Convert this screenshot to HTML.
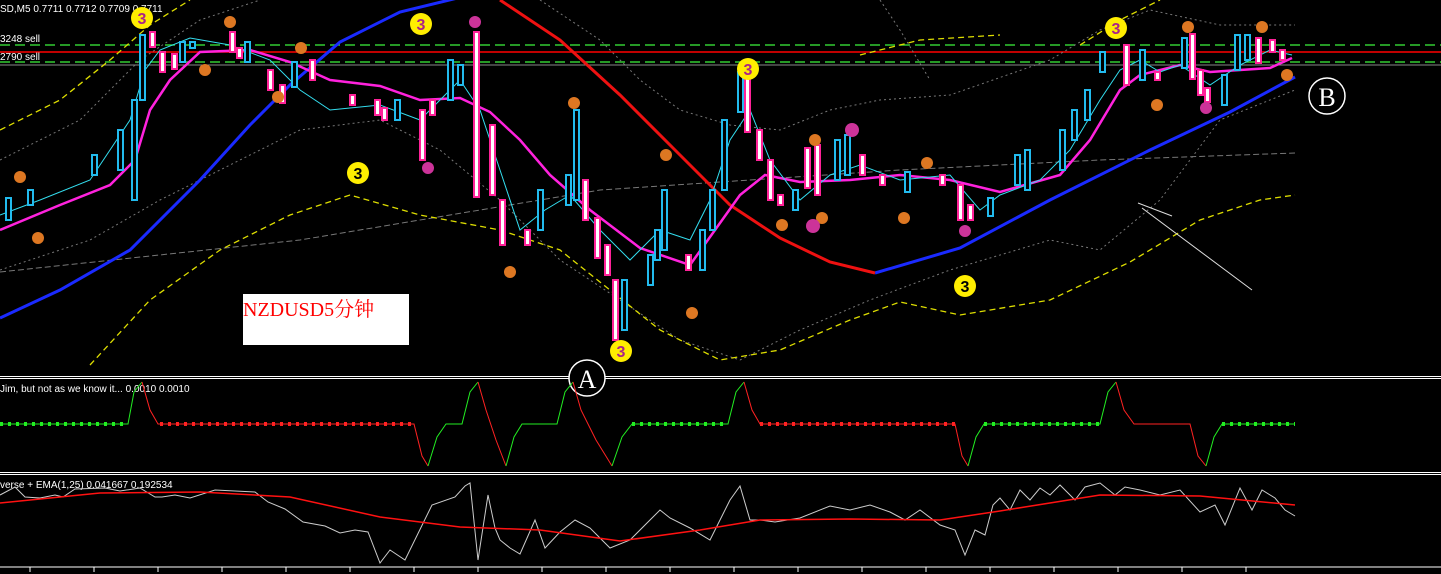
<!DOCTYPE html>
<html><head><meta charset="utf-8"><style>
html,body{margin:0;padding:0;background:#000;width:1441px;height:574px;overflow:hidden}
svg{display:block}
text{font-family:"Liberation Sans",sans-serif}
text.serif{font-family:"Liberation Serif","Noto Serif CJK SC",serif}
</style></head><body>
<svg width="1441" height="574" viewBox="0 0 1441 574" xmlns="http://www.w3.org/2000/svg">
<rect width="1441" height="574" fill="#000"/>
<line x1="0" y1="45" x2="1441" y2="45" stroke="#33cc33" stroke-width="1.5" stroke-dasharray="10,5"/>
<line x1="0" y1="52" x2="1441" y2="52" stroke="#ff0000" stroke-width="1.5"/>
<line x1="0" y1="62" x2="1441" y2="62" stroke="#33cc33" stroke-width="1.5" stroke-dasharray="10,5"/>
<line x1="0" y1="65" x2="1441" y2="65" stroke="#888" stroke-width="1"/>
<text x="0" y="12" fill="#fff" font-size="10">SD,M5  0.7711 0.7712 0.7709 0.7711</text>
<text x="0" y="42" fill="#fff" font-size="10">3248 sell</text>
<text x="0" y="60" fill="#fff" font-size="10">2790 sell</text>
<g fill="none" stroke="#777" stroke-width="1" stroke-dasharray="2,3">
<polyline points="0,160 80,120 140,60 200,20 260,0"/>
<polyline points="0,270 90,240 160,200 220,170 300,130 380,120 440,150 500,200 560,260 620,300 680,340 740,360 800,330 870,300 950,270 1050,240 1100,250 1160,200 1220,120 1295,90"/>
<polyline points="540,0 600,40 640,80 680,110 730,125 780,130 830,110 880,100 950,95 1050,60 1100,30 1150,10 1220,25 1295,25"/>
<polyline points="880,0 900,30 930,80"/>
</g>
<polyline points="0,272 300,240 600,190 900,170 1100,160 1295,153" fill="none" stroke="#777" stroke-width="1" stroke-dasharray="6,3"/>
<g fill="none" stroke="#dddd00" stroke-width="1.3" stroke-dasharray="6,4">
<polyline points="0,130 60,100 110,60 150,25 190,0"/>
<polyline points="90,365 150,300 220,250 290,215 350,195 420,215 500,230 560,250 610,290 660,330 720,360 780,350 850,320 900,302 960,315 1050,300 1130,262 1200,220 1260,200 1295,195"/>
<polyline points="1080,45 1120,20 1160,0"/>
<polyline points="860,55 920,40 1000,35"/>
</g>
<polyline points="0,318 60,290 130,250 200,180 250,125 290,85 340,42 400,12 470,-5" fill="none" stroke="#1a2aff" stroke-width="3"/>
<polyline points="875,273 960,248 1050,200 1150,150 1230,112 1295,77" fill="none" stroke="#1a2aff" stroke-width="3"/>
<polyline points="500,0 560,40 620,95 680,155 730,205 780,238 830,262 875,273" fill="none" stroke="#ee1111" stroke-width="3"/>
<polyline points="0,230 60,205 110,185 135,160 150,110 170,80 200,52 250,50 290,62 330,80 380,86 420,100 460,98 490,112 520,140 550,175 590,210 640,248 690,265 715,230 740,195 765,175 800,182 850,180 900,175 950,180 1000,192 1060,175 1090,140 1120,90 1140,75 1180,65 1210,72 1240,70 1270,68 1292,58" fill="none" stroke="#ff22dd" stroke-width="2.5"/>
<polyline points="0,215 40,200 90,180 130,120 145,70 160,50 190,38 230,45 270,60 300,90 330,110 380,105 420,120 460,80 480,110 500,170 520,230 545,210 570,195 600,230 630,260 660,230 690,240 710,200 730,140 750,110 770,160 800,200 830,175 860,165 900,180 950,175 980,210 1000,195 1040,180 1070,150 1100,100 1120,70 1140,60 1160,72 1180,65 1210,85 1240,65 1270,50 1292,55" fill="none" stroke="#33ddee" stroke-width="1"/>
<g fill="#000" stroke="#22bbee" stroke-width="2">
<rect x="6" y="198" width="5" height="22"/><rect x="28" y="190" width="5" height="15"/><rect x="92" y="155" width="5" height="20"/><rect x="118" y="130" width="5" height="40"/><rect x="132" y="100" width="5" height="100"/><rect x="140" y="35" width="5" height="65"/>
<rect x="180" y="42" width="5" height="20"/><rect x="190" y="42" width="5" height="6"/><rect x="245" y="42" width="5" height="20"/>
<rect x="292" y="62" width="5" height="25"/><rect x="395" y="100" width="5" height="20"/><rect x="448" y="60" width="5" height="40"/><rect x="458" y="65" width="5" height="20"/>
<rect x="538" y="190" width="5" height="40"/><rect x="566" y="175" width="5" height="30"/><rect x="574" y="110" width="5" height="90"/>
<rect x="622" y="280" width="5" height="50"/><rect x="648" y="255" width="5" height="30"/><rect x="655" y="230" width="5" height="30"/><rect x="662" y="190" width="5" height="60"/>
<rect x="700" y="230" width="5" height="40"/><rect x="710" y="190" width="5" height="40"/><rect x="722" y="120" width="5" height="70"/><rect x="738" y="72" width="5" height="40"/>
<rect x="793" y="190" width="5" height="20"/><rect x="835" y="140" width="5" height="40"/><rect x="845" y="135" width="5" height="40"/>
<rect x="905" y="172" width="5" height="20"/><rect x="988" y="198" width="5" height="18"/><rect x="1015" y="155" width="5" height="30"/><rect x="1025" y="150" width="5" height="40"/>
<rect x="1060" y="130" width="5" height="40"/><rect x="1072" y="110" width="5" height="30"/><rect x="1085" y="90" width="5" height="30"/><rect x="1100" y="52" width="5" height="20"/>
<rect x="1140" y="50" width="5" height="30"/><rect x="1182" y="38" width="5" height="30"/><rect x="1222" y="75" width="5" height="30"/><rect x="1235" y="35" width="5" height="35"/><rect x="1245" y="35" width="5" height="25"/>
</g>
<g fill="#fff" stroke="#ff2299" stroke-width="2">
<rect x="150" y="32" width="5" height="15"/><rect x="160" y="52" width="5" height="20"/><rect x="172" y="54" width="5" height="15"/><rect x="230" y="32" width="5" height="20"/><rect x="237" y="48" width="5" height="10"/>
<rect x="268" y="70" width="5" height="20"/><rect x="280" y="85" width="5" height="18"/><rect x="310" y="60" width="5" height="20"/><rect x="350" y="95" width="5" height="10"/><rect x="375" y="100" width="5" height="15"/><rect x="382" y="108" width="5" height="12"/>
<rect x="420" y="110" width="5" height="50"/><rect x="430" y="100" width="5" height="15"/><rect x="474" y="32" width="5" height="165"/><rect x="490" y="125" width="5" height="70"/>
<rect x="500" y="200" width="5" height="45"/><rect x="525" y="230" width="5" height="15"/><rect x="583" y="180" width="5" height="40"/><rect x="595" y="218" width="5" height="40"/><rect x="605" y="245" width="5" height="30"/><rect x="613" y="280" width="5" height="60"/>
<rect x="686" y="255" width="5" height="15"/><rect x="745" y="72" width="5" height="60"/><rect x="757" y="130" width="5" height="30"/><rect x="768" y="160" width="5" height="40"/><rect x="778" y="195" width="5" height="10"/>
<rect x="805" y="148" width="5" height="40"/><rect x="815" y="145" width="5" height="50"/><rect x="860" y="155" width="5" height="20"/><rect x="880" y="175" width="5" height="10"/><rect x="940" y="175" width="5" height="10"/><rect x="958" y="185" width="5" height="35"/><rect x="968" y="205" width="5" height="15"/>
<rect x="1124" y="45" width="5" height="40"/><rect x="1155" y="72" width="5" height="8"/><rect x="1190" y="34" width="5" height="45"/><rect x="1198" y="70" width="5" height="25"/><rect x="1205" y="88" width="5" height="14"/><rect x="1256" y="38" width="5" height="25"/><rect x="1270" y="40" width="5" height="12"/><rect x="1280" y="50" width="5" height="10"/>
</g>
<g font-size="11" font-weight="bold" text-anchor="middle">
<g fill="#dd7722"><circle cx="20" cy="177" r="6"/><circle cx="38" cy="238" r="6"/><circle cx="205" cy="70" r="6"/><circle cx="230" cy="22" r="6"/><circle cx="278" cy="97" r="6"/><circle cx="301" cy="48" r="6"/><circle cx="574" cy="103" r="6"/><circle cx="666" cy="155" r="6"/><circle cx="510" cy="272" r="6"/><circle cx="692" cy="313" r="6"/><circle cx="782" cy="225" r="6"/><circle cx="815" cy="140" r="6"/><circle cx="822" cy="218" r="6"/><circle cx="904" cy="218" r="6"/><circle cx="927" cy="163" r="6"/><circle cx="1157" cy="105" r="6"/><circle cx="1188" cy="27" r="6"/><circle cx="1262" cy="27" r="6"/><circle cx="1287" cy="75" r="6"/></g>
<g fill="#cc3399"><circle cx="428" cy="168" r="6"/><circle cx="475" cy="22" r="6"/><circle cx="852" cy="130" r="7"/><circle cx="813" cy="226" r="7"/><circle cx="965" cy="231" r="6"/><circle cx="1206" cy="108" r="6"/></g>
<g fill="#ffee00"><circle cx="142" cy="18" r="11"/><circle cx="421" cy="24" r="11"/><circle cx="358" cy="173" r="11"/><circle cx="748" cy="69" r="11"/><circle cx="1116" cy="28" r="11"/><circle cx="965" cy="286" r="11"/><circle cx="621" cy="351" r="11"/></g>
<g fill="#aa2288" font-size="16"><text x="142" y="24">3</text><text x="421" y="30">3</text><text x="748" y="75">3</text><text x="1116" y="34">3</text><text x="621" y="357">3</text></g>
<g fill="#000" font-size="16"><text x="358" y="179">3</text><text x="965" y="292">3</text></g>
</g>
<circle cx="1327" cy="96" r="18" fill="#000" stroke="#fff" stroke-width="1.5"/><text class="serif" x="1327" y="106" fill="#fff" font-size="26" text-anchor="middle">B</text>
<line x1="1138" y1="203" x2="1172" y2="216" stroke="#ddd"/><line x1="1142" y1="208" x2="1252" y2="290" stroke="#ddd"/>
<rect x="243" y="294" width="166" height="51" fill="#fff"/>
<text class="serif" x="243" y="316" fill="#ff0000" font-size="20">NZDUSD5分钟</text>
<rect x="0" y="376" width="1441" height="1" fill="#fff"/><rect x="0" y="378" width="1441" height="1" fill="#fff"/>
<rect x="0" y="472" width="1441" height="1" fill="#fff"/><rect x="0" y="474" width="1441" height="1" fill="#fff"/>
<circle cx="587" cy="378" r="18" fill="#000" stroke="#fff" stroke-width="1.5"/><text class="serif" x="587" y="388" fill="#fff" font-size="26" text-anchor="middle">A</text>
<text x="0" y="392" fill="#fff" font-size="10">Jim, but not as we know it...  0.0010 0.0010</text>
<polyline points="0,424 128,424 134,392 142,382" fill="none" stroke="#22ee22" stroke-width="1"/>
<polyline points="142,382 150,410 158,424 414,424 422,456 428,466" fill="none" stroke="#ff2222" stroke-width="1"/>
<polyline points="428,466 437,437 446,424 462,424 470,392 478,382" fill="none" stroke="#22ee22"/>
<polyline points="478,382 486,410 496,440 506,466" fill="none" stroke="#ff2222"/>
<polyline points="506,466 514,437 522,424 557,424 565,392 573,382" fill="none" stroke="#22ee22"/>
<polyline points="573,382 581,410 596,440 612,466" fill="none" stroke="#ff2222"/>
<polyline points="612,466 622,437 632,424 728,424 736,392 744,382" fill="none" stroke="#22ee22"/>
<polyline points="744,382 752,410 760,424 955,424 962,456 968,466" fill="none" stroke="#ff2222"/>
<polyline points="968,466 976,437 984,424 1100,424 1108,392 1116,382" fill="none" stroke="#22ee22"/>
<polyline points="1116,382 1124,410 1134,424 1190,424 1198,456 1206,466" fill="none" stroke="#ff2222"/>
<polyline points="1206,466 1214,437 1222,424 1295,424" fill="none" stroke="#22ee22"/>
<line x1="0" y1="424" x2="128" y2="424" stroke="#22ee22" stroke-width="4" stroke-dasharray="3,5"/>
<line x1="160" y1="424" x2="414" y2="424" stroke="#ff2222" stroke-width="4" stroke-dasharray="3,5"/>
<line x1="760" y1="424" x2="955" y2="424" stroke="#ff2222" stroke-width="4" stroke-dasharray="3,5"/>
<line x1="984" y1="424" x2="1100" y2="424" stroke="#22ee22" stroke-width="4" stroke-dasharray="3,5"/>
<line x1="1222" y1="424" x2="1295" y2="424" stroke="#22ee22" stroke-width="4" stroke-dasharray="3,5"/>
<line x1="632" y1="424" x2="728" y2="424" stroke="#22ee22" stroke-width="4" stroke-dasharray="3,5"/>
<text x="0" y="488" fill="#fff" font-size="10">verse + EMA(1,25) 0.041667 0.192534</text>
<polyline points="0,495 15,487 25,497 40,498 55,495 63,497 75,489 105,488 120,491 140,488 155,497 162,497 175,495 190,498 215,490 235,491 255,492 268,502 285,509 303,522 325,526 340,533 355,530 368,532 380,563 390,550 405,560 432,505 455,497 465,486 470,483 478,560 488,495 495,528 500,540 510,548 520,554 535,520 545,548 560,532 575,520 590,528 610,548 630,540 650,520 660,510 670,518 690,528 710,540 730,500 740,486 750,520 760,520 775,522 800,518 830,506 850,510 870,505 890,512 905,520 920,510 940,525 955,530 965,555 975,530 985,535 993,505 1000,498 1010,510 1020,490 1030,500 1040,488 1050,495 1060,485 1075,500 1085,487 1100,483 1115,495 1125,487 1140,490 1160,495 1180,490 1200,512 1215,505 1225,525 1240,488 1252,510 1262,490 1275,498 1285,510 1295,516" fill="none" stroke="#cccccc" stroke-width="1"/>
<polyline points="0,503 100,493 200,492 290,497 380,517 460,527 540,530 620,541 700,530 760,520 850,519 940,520 1000,511 1100,495 1200,496 1295,505" fill="none" stroke="#ff1111" stroke-width="1.5"/>
<line x1="0" y1="567" x2="1441" y2="567" stroke="#fff"/>
<g stroke="#fff">
<line x1="30" y1="567" x2="30" y2="572"/><line x1="94" y1="567" x2="94" y2="572"/><line x1="158" y1="567" x2="158" y2="572"/><line x1="222" y1="567" x2="222" y2="572"/><line x1="286" y1="567" x2="286" y2="572"/><line x1="350" y1="567" x2="350" y2="572"/><line x1="414" y1="567" x2="414" y2="572"/><line x1="478" y1="567" x2="478" y2="572"/><line x1="542" y1="567" x2="542" y2="572"/><line x1="606" y1="567" x2="606" y2="572"/><line x1="670" y1="567" x2="670" y2="572"/><line x1="734" y1="567" x2="734" y2="572"/><line x1="798" y1="567" x2="798" y2="572"/><line x1="862" y1="567" x2="862" y2="572"/><line x1="926" y1="567" x2="926" y2="572"/><line x1="990" y1="567" x2="990" y2="572"/><line x1="1054" y1="567" x2="1054" y2="572"/><line x1="1118" y1="567" x2="1118" y2="572"/><line x1="1182" y1="567" x2="1182" y2="572"/><line x1="1246" y1="567" x2="1246" y2="572"/>
</g>
</svg>
</body></html>
